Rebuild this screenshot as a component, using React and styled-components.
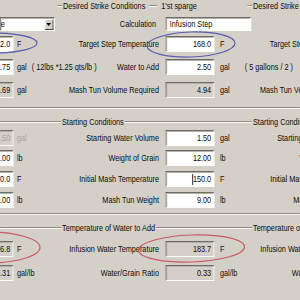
import React from 'react';
import styled, { createGlobalStyle, css } from 'styled-components';

// the screenshot is squeezed sideways; lay out in wide units, then squeeze
const SX = 0.785;
const u = v => `${(v / SX).toFixed(2)}px`;

const Global = createGlobalStyle`
  html, body { margin: 0; padding: 0; background: #d4d0c8; }
`;

const Frame = styled.div`
  position: relative;
  width: 300px;
  height: 300px;
  overflow: hidden;
  background: #d4d0c8;
`;

const Page = styled.div`
  width: ${u(300)};
  height: 300px;
  transform: scaleX(${SX});
  transform-origin: 0 0;
  font-family: "Liberation Sans", Arial, sans-serif;
  font-size: 9.3px;
  color: #0c0c0c;
  display: flex;
  flex-direction: column;
`;

const TitleRow = styled.div`
  display: flex;
  align-items: center;
  width: ${u(450)};
  height: 12px;
  margin-top: ${p => p.$mt || 0}px;
  flex-shrink: 0;
`;

const TitleGroup = styled.div`
  display: flex;
  align-items: center;
  width: ${p => (p.$w ? u(p.$w) : 'auto')};
  flex: ${p => (p.$w ? '0 0 auto' : '1 1 auto')};
`;

const Gap = styled.div`
  width: ${p => u(p.$w || 0)};
  flex: ${p => (p.$grow ? '1 1 auto' : '0 0 auto')};
`;

const Rule = styled.div`
  height: 0;
  border-top: 1px solid #8c8a85;
  border-bottom: 1px solid #fbfbf8;
  width: ${p => (p.$w ? u(p.$w) : 'auto')};
  flex: ${p => (p.$w ? '0 0 auto' : '1 1 auto')};
  margin: 0 ${p => u(p.$mx || 0)};
`;

const Caption = styled.span`
  padding: 0 ${u(1)};
  white-space: nowrap;
`;

const Separator = styled.div`
  width: 100%;
  height: 0;
  border-top: 1px solid #8c8a85;
  border-bottom: 1px solid #fbfbf8;
  margin-top: ${p => p.$mt || 0}px;
  flex-shrink: 0;
`;

const Row = styled.div`
  display: grid;
  grid-template-columns: ${u(13)} ${u(4)} ${u(142)} ${u(7)} ${u(48)} ${u(6)} ${u(130)};
  width: ${u(350)};
  height: ${p => p.$h || 16}px;
  margin-top: ${p => p.$mt || 0}px;
  align-items: center;
  flex-shrink: 0;
`;

const Label = styled.span`
  grid-column: ${p => p.$col};
  grid-row: 1;
  justify-self: end;
  white-space: nowrap;
  margin-right: ${p => u(p.$mr || 0)};
`;

const Units = styled.span`
  grid-column: ${p => p.$col};
  grid-row: 1;
  justify-self: start;
  display: flex;
  white-space: nowrap;
  color: ${p => (p.$dim ? '#a8a49c' : 'inherit')};
`;

const Note = styled.span`
  margin-left: ${p => u(p.$ml)};
`;

const sunken = css`
  box-sizing: border-box;
  border: 1px solid;
  border-color: #6e6c68 #fbfbf8 #fbfbf8 #6e6c68;
  box-shadow: inset 1px 1px 0 #b4b1aa;
`;

const Field = styled.div`
  ${sunken};
  grid-column: ${p => p.$col};
  grid-row: 1;
  height: 16px;
  background: ${p => (p.$readOnly ? '#d4d0c8' : '#fff')};
  color: ${p => (p.$dim ? '#a8a49c' : '#0c0c0c')};
  display: flex;
  align-items: center;
  justify-content: flex-end;
  padding-right: ${u(2)};
  ${p => p.$edge && css`
    width: ${u(48)};
    margin-left: ${u(-35)};
  `}
`;

const Caret = styled.span`
  width: 1px;
  height: 11px;
  background: #000;
`;

const Combo = styled.div`
  ${sunken};
  grid-column: ${p => p.$col};
  grid-row: 1;
  justify-self: start;
  width: ${p => u(p.$w)};
  height: 14px;
  background: #fff;
  display: flex;
  align-items: center;
  padding-left: ${p => u(p.$pad)};
  padding-right: 1px;
`;

const ComboText = styled.span`
  flex: 1;
  white-space: nowrap;
  overflow: hidden;
`;

const DropButton = styled.div`
  width: ${u(9)};
  height: 11px;
  box-sizing: border-box;
  background: #d4d0c8;
  border: 1px solid;
  border-color: #fbfbf8 #404040 #404040 #fbfbf8;
  display: flex;
  align-items: center;
  justify-content: center;
  &::after {
    content: '';
    border-left: 3px solid transparent;
    border-right: 3px solid transparent;
    border-top: 3px solid #000;
  }
`;

const Overlay = styled.svg`
  position: absolute;
  left: 0;
  top: 0;
  pointer-events: none;
`;

export default function App() {
  return (
    <>
      <Global />
      <Frame>
        <Page>
          <TitleRow>
            <TitleGroup $w={252}>
              <Gap $w={57} />
              <Rule $w={5} />
              <Caption>Desired Strike Conditions</Caption>
              <Rule $w={8} $mx={3} />
              <Caption>1'st sparge</Caption>
              <Gap $grow />
              <Rule $w={5} />
            </TitleGroup>
            <TitleGroup>
              <Caption>Desired Strike Conditions</Caption>
            </TitleGroup>
          </TitleRow>

          <Row $h={14} $mt={5}>
            <Combo $col="1 / 4" $w={55} $pad={0}>
              <ComboText>e</ComboText>
              <DropButton />
            </Combo>
            <Label $col={3} $mr={3}>Calculation</Label>
            <Combo $col="5 / 8" $w={85} $pad={3}>
              <ComboText>Infusion Step</ComboText>
            </Combo>
          </Row>

          <Row $mt={5}>
            <Field $col={1} $edge>2.0</Field>
            <Units $col={3}>F</Units>
            <Label $col={3}>Target Step Temperature</Label>
            <Field $col={5}>168.0</Field>
            <Units $col={7}>F</Units>
            <Label $col={7}>Target Step Temperature</Label>
          </Row>

          <Row $mt={7}>
            <Field $col={1} $edge>3.75</Field>
            <Units $col={3}>gal<Note $ml={5}>( 12lbs *1.25 qts/lb )</Note></Units>
            <Label $col={3}>Water to Add</Label>
            <Field $col={5}>2.50</Field>
            <Units $col={7}>gal<Note $ml={15}>( 5 gallons / 2 )</Note></Units>
          </Row>

          <Row $mt={7}>
            <Field $col={1} $edge $readOnly>4.69</Field>
            <Units $col={3}>gal</Units>
            <Label $col={3}>Mash Tun Volume Required</Label>
            <Field $col={5} $readOnly>4.94</Field>
            <Units $col={7}>gal</Units>
            <Label $col={7}>Mash Tun Volume Required</Label>
          </Row>

          <Separator $mt={9} />

          <TitleRow $mt={7}>
            <TitleGroup $w={252}>
              <Rule $w={61} />
              <Caption>Starting Conditions</Caption>
              <Rule />
            </TitleGroup>
            <TitleGroup>
              <Caption>Starting Conditions</Caption>
              <Rule />
            </TitleGroup>
          </TitleRow>

          <Row $mt={2}>
            <Field $col={1} $edge $readOnly $dim>1.50</Field>
            <Units $col={3} $dim>gal</Units>
            <Label $col={3}>Starting Water Volume</Label>
            <Field $col={5}>1.50</Field>
            <Units $col={7}>gal</Units>
            <Label $col={7}>Starting Water Volume</Label>
          </Row>

          <Row $mt={4}>
            <Field $col={1} $edge>12.00</Field>
            <Units $col={3}>lb</Units>
            <Label $col={3}>Weight of Grain</Label>
            <Field $col={5}>12.00</Field>
            <Units $col={7}>lb</Units>
            <Label $col={7}>Weight of Grain</Label>
          </Row>

          <Row $mt={5}>
            <Field $col={1} $edge>170.0</Field>
            <Units $col={3}>F</Units>
            <Label $col={3}>Initial Mash Temperature</Label>
            <Field $col={5}><Caret />150.0</Field>
            <Units $col={7}>F</Units>
            <Label $col={7}>Initial Mash Temperature</Label>
          </Row>

          <Row $mt={5}>
            <Field $col={1} $edge>9.00</Field>
            <Units $col={3}>lb</Units>
            <Label $col={3}>Mash Tun Weight</Label>
            <Field $col={5}>9.00</Field>
            <Units $col={7}>lb</Units>
            <Label $col={7}>Mash Tun Weight</Label>
          </Row>

          <Separator $mt={5} />

          <TitleRow $mt={7}>
            <TitleGroup $w={252}>
              <Rule $w={61} />
              <Caption>Temperature of Water to Add</Caption>
              <Rule />
            </TitleGroup>
            <TitleGroup>
              <Caption>Temperature of Water to Add</Caption>
              <Rule />
            </TitleGroup>
          </TitleRow>

          <Row $mt={7}>
            <Field $col={1} $edge $readOnly>176.8</Field>
            <Units $col={3}>F</Units>
            <Label $col={3}>Infusion Water Temperature</Label>
            <Field $col={5} $readOnly>183.7</Field>
            <Units $col={7}>F</Units>
            <Label $col={7}>Infusion Water Temperature</Label>
          </Row>

          <Row $mt={8}>
            <Field $col={1} $edge $readOnly>0.31</Field>
            <Units $col={3}>gal/lb</Units>
            <Label $col={3}>Water/Grain Ratio</Label>
            <Field $col={5} $readOnly>0.33</Field>
            <Units $col={7}>gal/lb</Units>
            <Label $col={7}>Water/Grain Ratio</Label>
          </Row>
        </Page>

        <Overlay width="300" height="300" viewBox="0 0 300 300">
          <g fill="none" strokeWidth="1.2">
            <ellipse cx="-7" cy="43" rx="44" ry="10" stroke="#5a5ab0" />
            <ellipse cx="191" cy="44.5" rx="44" ry="12.5" stroke="#5a5ab0" transform="rotate(-2 191 44.5)" />
            <ellipse cx="-13" cy="247.5" rx="53" ry="15.5" stroke="#c85a66" />
            <ellipse cx="191.5" cy="248.5" rx="53" ry="13.5" stroke="#c85a66" transform="rotate(-2 191.5 248.5)" />
          </g>
        </Overlay>
      </Frame>
    </>
  );
}
